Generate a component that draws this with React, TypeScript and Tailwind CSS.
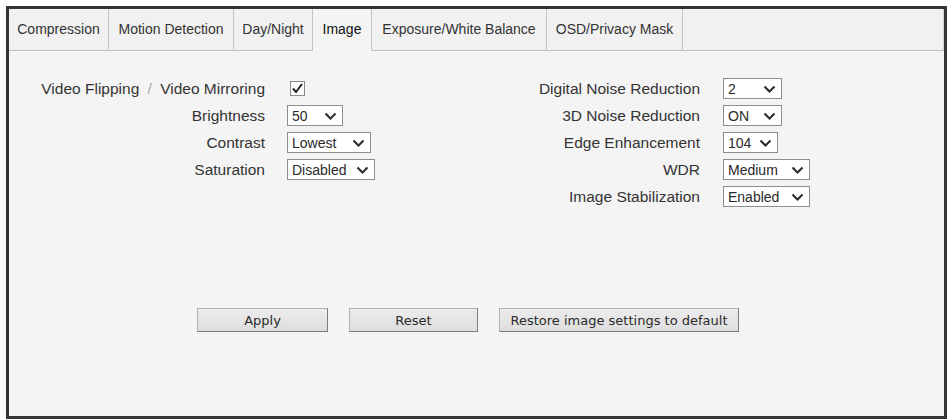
import React from "react";

const tabs = [
  { name: "Compression", w: "w-[100px]" },
  { name: "Motion Detection", w: "w-[125px]" },
  { name: "Day/Night", w: "w-[79px]" },
  { name: "Image", w: "w-[59px]", active: true },
  { name: "Exposure/White Balance", w: "w-[175px]" },
  { name: "OSD/Privacy Mask", w: "w-[136px]" },
];

const Chevron = () => (
  <svg width="13" height="8" viewBox="0 0 13 8" className="shrink-0">
    <polyline points="1.5,1.5 6.5,6.5 11.5,1.5" fill="none" stroke="#2b2b2b" strokeWidth="2" />
  </svg>
);

const Select = ({ value, w }: { value: string; w: string }) => (
  <div
    className={`${w} h-[21px] flex items-center justify-between bg-white border border-[#8e8e8e] pl-[4px] pr-[5px] text-[14px] text-[#2a2a2a] leading-none`}
  >
    <span>{value}</span>
    <Chevron />
  </div>
);

const Checkbox = () => (
  <div className="ml-[3px] w-[15px] h-[15px] bg-white border border-[#8a8a8a] flex items-center justify-center">
    <svg width="13" height="13" viewBox="0 0 13 13">
      <polyline points="2,6.5 5,10 11,2" fill="none" stroke="#222" strokeWidth="2" />
    </svg>
  </div>
);

const Row = ({ label, children }: { label: React.ReactNode; children: React.ReactNode }) => (
  <>
    <div className="h-[27px] flex items-center justify-end whitespace-nowrap">{label}</div>
    <div className="h-[27px] flex items-center">{children}</div>
  </>
);

const Button = ({ label, w }: { label: string; w: string }) => (
  <button
    className={`${w} h-[24px] bg-gradient-to-b from-[#ececec] to-[#dedede] border border-[#b0b0b0] border-r-[#7d7d7d] border-b-[#7d7d7d] text-[13px] text-[#2b2b2b] leading-none`}
    style={{ fontFamily: '"DejaVu Sans", sans-serif' }}
  >
    {label}
  </button>
);

export default function App() {
  return (
    <div
      className="w-[951px] h-[420px] bg-white pt-[6px] pl-[6px]"
      style={{ fontFamily: '"Liberation Sans", Arial, sans-serif' }}
    >
      <div className="w-[941px] h-[413px] border-[3px] border-[#353535] bg-[#f4f4f4] flex flex-col">
        {/* tab bar */}
        <div className="flex h-[42px] shrink-0 bg-[#f1f1f1]">
          {tabs.map((t) => (
            <div
              key={t.name}
              className={`${t.w} flex items-center justify-center border-r border-[#c4c4c4] text-[14px] ${
                t.active
                  ? "border-b border-b-transparent bg-[#f4f4f4] text-[#111]"
                  : "border-b border-b-[#bdbdbd] text-[#333]"
              }`}
            >
              {t.name}
            </div>
          ))}
          <div className="flex-1 border-b border-[#bdbdbd] border-r border-r-[#d4d4d4]" />
        </div>

        {/* settings */}
        <div className="flex pt-[24px] pl-[20px] text-[15.5px] text-[#333]">
          <div className="w-[491px] grid grid-cols-[236px_auto] gap-x-[22px] content-start">
            <Row
              label={
                <span>
                  Video Flipping <span className="text-[#a8a8a8] mx-[4px]">/</span> Video Mirroring
                </span>
              }
            >
              <Checkbox />
            </Row>
            <Row label="Brightness">
              <Select value="50" w="w-[56px]" />
            </Row>
            <Row label="Contrast">
              <Select value="Lowest" w="w-[84px]" />
            </Row>
            <Row label="Saturation">
              <Select value="Disabled" w="w-[88px]" />
            </Row>
          </div>
          <div className="grid grid-cols-[180px_auto] gap-x-[23px] content-start">
            <Row label="Digital Noise Reduction">
              <Select value="2" w="w-[59px]" />
            </Row>
            <Row label="3D Noise Reduction">
              <Select value="ON" w="w-[59px]" />
            </Row>
            <Row label="Edge Enhancement">
              <Select value="104" w="w-[55px]" />
            </Row>
            <Row label="WDR">
              <Select value="Medium" w="w-[87px]" />
            </Row>
            <Row label="Image Stabilization">
              <Select value="Enabled" w="w-[87px]" />
            </Row>
          </div>
        </div>

        {/* actions */}
        <div className="flex gap-x-[21px] pl-[188px] mt-[98px]">
          <Button label="Apply" w="w-[131px]" />
          <Button label="Reset" w="w-[129px]" />
          <Button label="Restore image settings to default" w="w-[240px]" />
        </div>
      </div>
    </div>
  );
}
